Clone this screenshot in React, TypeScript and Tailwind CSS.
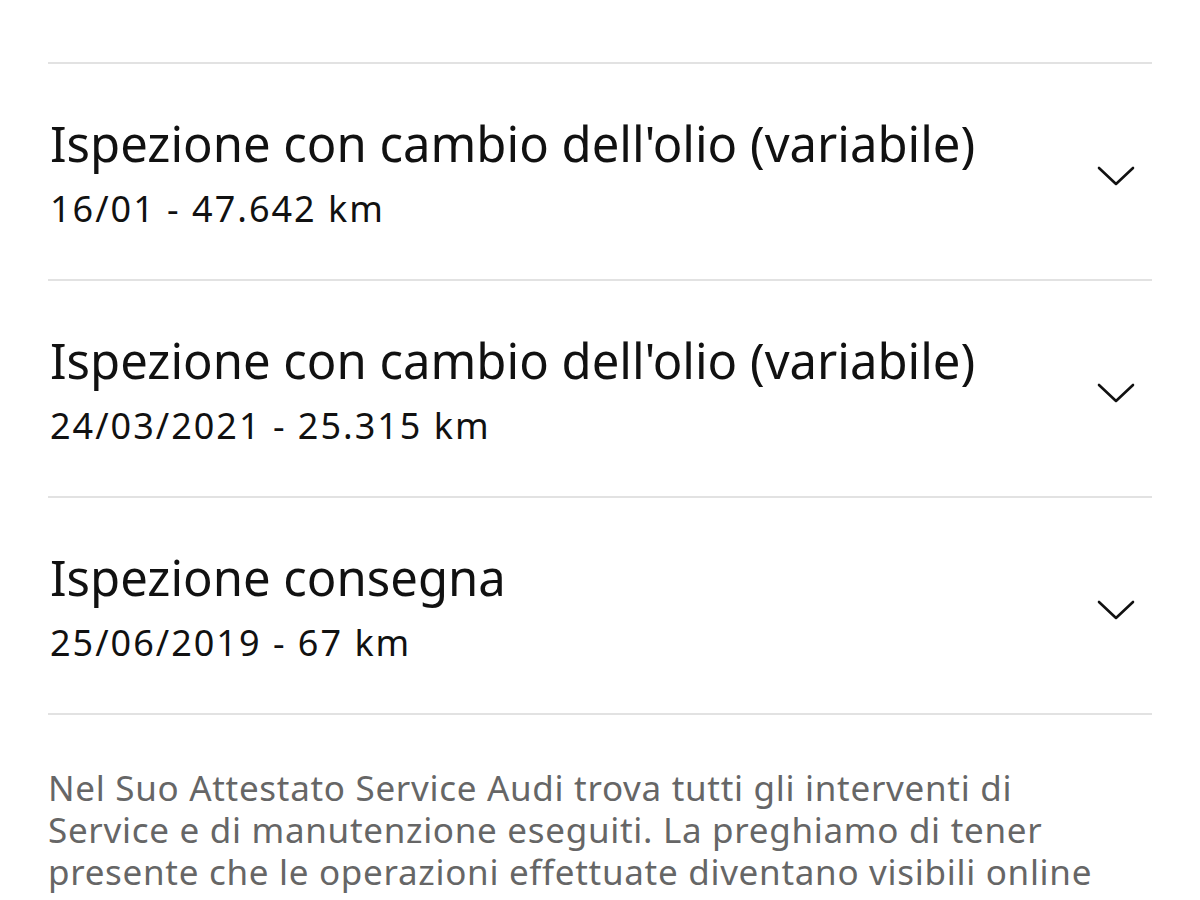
import React from 'react';

type Intervento = {
  titolo: string;
  dettaglio: string;
};

const interventi: Intervento[] = [
  { titolo: "Ispezione con cambio dell'olio (variabile)", dettaglio: '16/01 - 47.642 km' },
  { titolo: "Ispezione con cambio dell'olio (variabile)", dettaglio: '24/03/2021 - 25.315 km' },
  { titolo: 'Ispezione consegna', dettaglio: '25/06/2019 - 67 km' },
];

const Chevron: React.FC = () => (
  <svg width="40" height="24" viewBox="0 0 40 24" fill="none" className="shrink-0">
    <path d="M3 4 L20 20 L37 4" stroke="#111" strokeWidth="2.6" strokeLinecap="round" strokeLinejoin="round" />
  </svg>
);

const App: React.FC = () => {
  return (
    <div className="min-h-screen bg-white px-[48px] pt-[62px] text-[#111]" style={{ fontFamily: '"Noto Sans", "Open Sans", sans-serif' }}>
      <div className="border-t-2 border-[#e2e2e2]">
        {interventi.map((item, index) => (
          <div key={index} className="flex h-[217px] items-center justify-between border-b-2 border-[#e2e2e2] pr-[16px]">
            <div className="pl-[2px]">
              <div className="text-[49px] leading-[60px]">{item.titolo}</div>
              <div className="mt-[14px] text-[36px] leading-[44px] tracking-[2px]">{item.dettaglio}</div>
            </div>
            <div className="pt-[8px]">
              <Chevron />
            </div>
          </div>
        ))}
      </div>

      {/* testo informativo */}
      <p className="mt-[52px] text-[35px] leading-[42px] tracking-[0.7px] text-[#666]">
        Nel Suo Attestato Service Audi trova tutti gli interventi di
        <br />
        Service e di manutenzione eseguiti. La preghiamo di tener
        <br />
        presente che le operazioni effettuate diventano visibili online
      </p>
    </div>
  );
};

export default App;
